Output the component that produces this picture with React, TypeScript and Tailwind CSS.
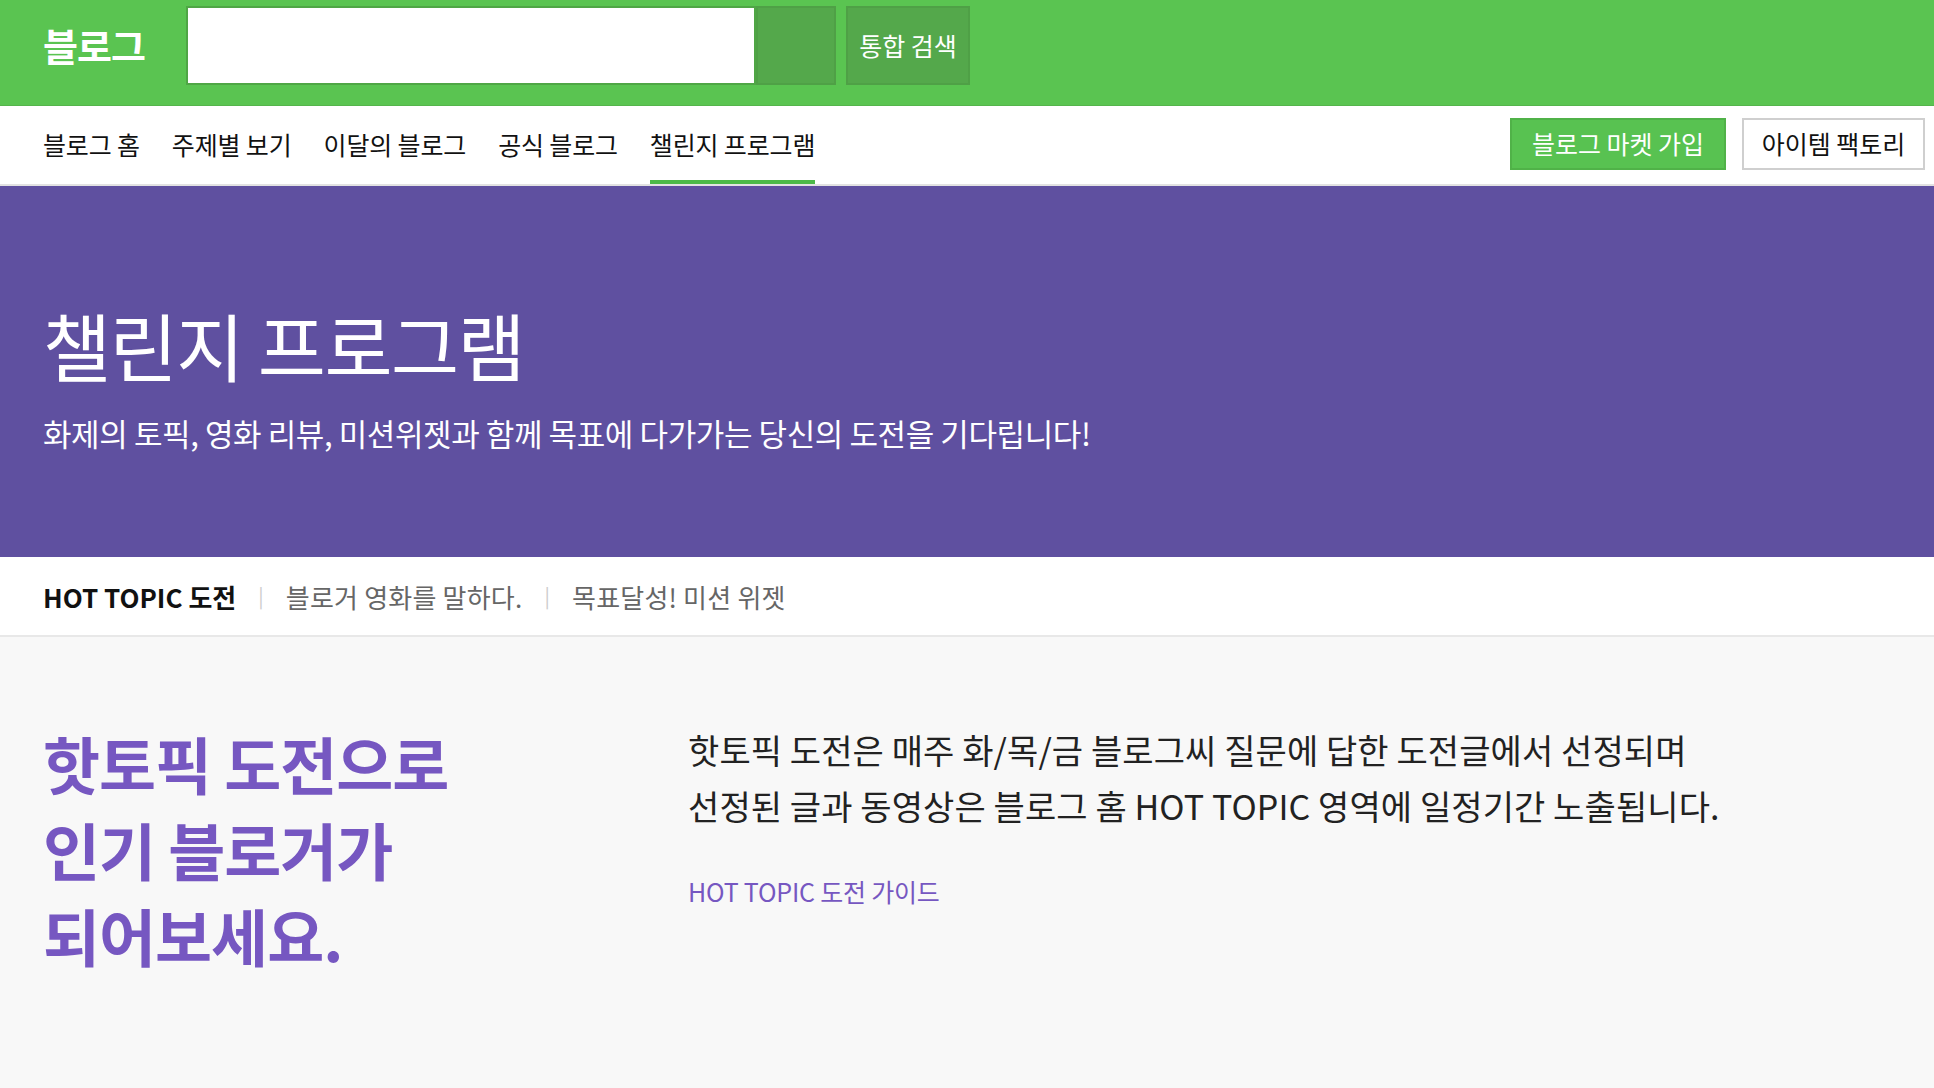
import React from "react";

const font = { fontFamily: '"Noto Sans CJK KR", "Noto Sans", sans-serif' };

export default function App() {
  const navItems = ["블로그 홈", "주제별 보기", "이달의 블로그", "공식 블로그", "챌린지 프로그램"];
  return (
    <div style={font} className="w-[1934px] min-h-[1088px] bg-[#f8f8f8]">
      {/* Header */}
      <header className="h-[106px] bg-[#5ac451] flex items-start pt-[6px] border-b border-[#55b44c]">
        <div className="w-[186px] pl-[43px] h-[77px] flex items-center">
          <span className="text-white font-bold text-[38px] tracking-[-1px] leading-none">블로그</span>
        </div>
        <div className="w-[570px] h-[79px] bg-white border-2 border-[#4fa645]" />
        <div className="w-[80px] h-[79px] bg-[#54a84b] border-2 border-[#4fa046]" />
        <button className="ml-[10px] w-[124px] h-[79px] bg-[#54a84b] border-2 border-[#4fa046] text-white text-[25px] flex items-center justify-center">
          통합 검색
        </button>
      </header>

      {/* Nav */}
      <nav className="h-[80px] bg-white border-b-2 border-[#e2e2e2] flex items-stretch justify-between pl-[43px] pr-[9px]">
        <ul className="flex items-stretch gap-[32px]">
          {navItems.map((t, i) => (
            <li
              key={t}
              className={
                "flex items-center text-[25px] tracking-[-0.15px] text-[#111] " +
                (i === 4 ? "border-b-4 border-[#4cb948] pt-[3px]" : "")
              }
            >
              {t}
            </li>
          ))}
        </ul>
        <div className="flex items-center gap-[16px] pb-[2px]">
          <button className="w-[216px] h-[52px] bg-[#58c251] border-2 border-[#50b248] text-white text-[25px]">
            블로그 마켓 가입
          </button>
          <button className="w-[183px] h-[52px] bg-white border-2 border-[#cfcfcf] text-[#111] text-[25px]">
            아이템 팩토리
          </button>
        </div>
      </nav>

      {/* Hero */}
      <section className="h-[371px] bg-[#5f50a0] pl-[43px] pt-[121px]">
        <h1 className="text-white text-[74px] leading-none tracking-[-1.5px]">챌린지 프로그램</h1>
        <p className="mt-[36px] text-white text-[31px] leading-none tracking-[-0.4px]">
          화제의 토픽, 영화 리뷰, 미션위젯과 함께 목표에 다가가는 당신의 도전을 기다립니다!
        </p>
      </section>

      {/* Sub nav */}
      <div className="h-[80px] bg-white border-b-2 border-[#e8e8e8] flex items-center pl-[43px] text-[26px] tracking-[0.2px]">
        <span className="font-bold text-[#111] tracking-[0px]">HOT TOPIC 도전</span>
        <span className="mx-[22px] text-[#cccccc] text-[20px]">|</span>
        <span className="text-[#666]">블로거 영화를 말하다.</span>
        <span className="mx-[22px] text-[#cccccc] text-[20px]">|</span>
        <span className="text-[#666]">목표달성! 미션 위젯</span>
      </div>

      {/* Main */}
      <main className="flex pl-[43px] pt-[83px] pb-[100px]">
        <h2 className="w-[645px] text-[#7657c1] font-bold text-[62px] leading-[86px] tracking-[-1px]">
          핫토픽 도전으로
          <br />
          인기 블로거가
          <br />
          되어보세요.
        </h2>
        <div className="pt-[2px]">
          <p className="text-[#222] text-[34px] leading-[56px] tracking-[0.1px]">
            핫토픽 도전은 매주 화/목/금 블로그씨 질문에 답한 도전글에서 선정되며
            <br />
            선정된 글과 동영상은 블로그 홈 HOT TOPIC 영역에 일정기간 노출됩니다.
          </p>
          <a className="block mt-[39px] text-[#7657c1] text-[25px] tracking-[-0.2px]">HOT TOPIC 도전 가이드</a>
        </div>
      </main>
    </div>
  );
}
